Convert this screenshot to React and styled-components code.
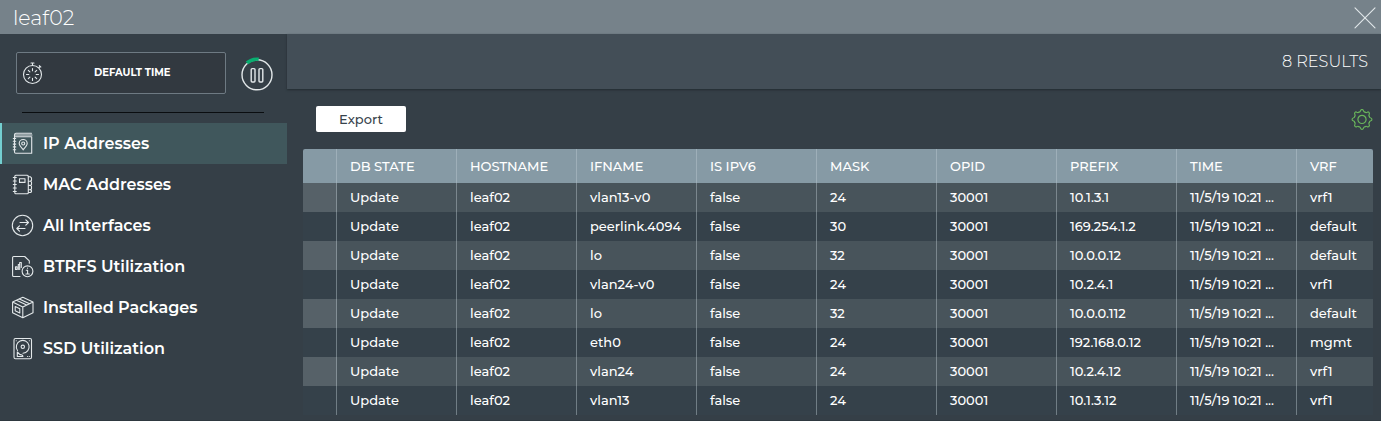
import React from "react";
import styled, { createGlobalStyle } from "styled-components";

const GlobalStyle = createGlobalStyle`
  * { box-sizing: border-box; }
  body { margin: 0; background: #353f47; font-family: Montserrat, Inter, "Liberation Sans", sans-serif; color: #fff; overflow: hidden; }
`;

const Panel = styled.div`
  height: 421px;
  display: flex;
  flex-direction: column;
  background: #353f47;
  border-bottom: 1px solid #2e383f;
`;

const TitleBar = styled.header`
  height: 34px;
  flex: none;
  display: flex;
  align-items: center;
  justify-content: space-between;
  padding: 1px 5px 0 13px;
  background: #76828a;
`;

const Title = styled.h1`
  margin: 0;
  font-size: 20.5px;
  font-weight: 300;
  line-height: 32px;
`;

const Body = styled.div`
  flex: 1;
  min-height: 0;
  display: flex;
`;

const Sidebar = styled.aside`
  width: 287px;
  flex: none;
  background: #353f47;
`;

const TimeControls = styled.div`
  display: flex;
  align-items: center;
  gap: 14px;
  padding: 18px 0 0 16px;
`;

const TimeButton = styled.button`
  width: 210px;
  height: 42px;
  display: flex;
  align-items: center;
  padding: 0 0 0 5px;
  background: #323940;
  border: 1px solid #6e7a83;
  border-radius: 2px;
  color: #fff;
  font: 700 10px/14px Montserrat, Inter, sans-serif;
`;

const TimeLabel = styled.span`
  padding-left: 50px;
  white-space: nowrap;
`;

const Divider = styled.hr`
  width: 242px;
  height: 1px;
  margin: 18px 0 10px 22px;
  border: 0;
  background: #0a0d10;
`;

const NavItem = styled.a`
  height: 41px;
  display: flex;
  align-items: center;
  gap: 9px;
  padding-left: ${(p) => (p.$active ? 9 : 11)}px;
  border-left: ${(p) => (p.$active ? "2px solid #73cfd0" : "0")};
  background: ${(p) => (p.$active ? "#40575c" : "transparent")};
`;

const NavLabel = styled.span`
  font-size: 16px;
  font-weight: 600;
  white-space: nowrap;
`;

const Main = styled.main`
  flex: 1;
  min-width: 0;
`;

const ResultsBar = styled.div`
  height: 55px;
  display: flex;
  align-items: center;
  justify-content: flex-end;
  padding: 0 13px 1px 0;
  background: #434e57;
  box-shadow: 0 1px 2px #222b31;
  font-size: 16.1px;
  font-weight: 300;
`;

const Toolbar = styled.div`
  height: 60px;
  display: flex;
  align-items: center;
  justify-content: space-between;
  padding: 0 8px 0 29px;
`;

const ExportButton = styled.button`
  width: 90px;
  height: 26px;
  padding: 0;
  border: 0;
  border-radius: 2px;
  background: #fff;
  color: #37434b;
  font: 500 13px/26px Montserrat, Inter, sans-serif;
`;

const Table = styled.div`
  margin: 0 8px 0 16px;
  border-radius: 2px 2px 0 0;
  overflow: hidden;
`;

const Row = styled.div`
  height: ${(p) => (p.$head ? 34 : 29)}px;
  display: grid;
  grid-template-columns: 34px repeat(8, 120px) 1fr;
  line-height: ${(p) => (p.$head ? 34 : 28)}px;
  background: ${(p) => (p.$head ? "#869aa5" : p.$striped ? "#48545b" : "#35414a")};
`;

const Cell = styled.div`
  padding-left: 13px;
  font-size: 13px;
  font-weight: 500;
  white-space: nowrap;
  border-right: 1px solid rgba(190, 203, 210, 0.43);
  &:last-child { border-right: 0; }
`;

const MarkerCell = styled(Cell)`
  background: ${(p) => (p.$striped ? "#566168" : "transparent")};
`;

const LineIcon = styled.svg`
  flex: none;
  fill: none;
  stroke: ${(p) => p.$color || "#e3e8ea"};
  stroke-width: ${(p) => p.$weight || 1.1};
  stroke-linejoin: round;
  stroke-linecap: round;
`;

const SettingsIcon = styled(LineIcon)`
  position: relative;
  top: 1px;
`;

const ProgressArc = styled.path`
  stroke: #08ae70;
  stroke-width: 3.4;
`;

const NavIcon = ({ children }) => (
  <LineIcon width="23" height="23" viewBox="0 0 23 23">{children}</LineIcon>
);

const IpIcon = () => (
  <NavIcon>
    <path d="M3.500 5V2.700A1.500 1.500 0 0 1 5 1.300H20.500M4 3h17M3.500 4.700h17.200v16.600H4.700a1.200 1.200 0 0 1-1.200-1.200V4.700" />
    <path d="M2.300 6.500h2.400M2.300 9.300h2.400M2.300 12.100h2.400M2.300 14.900h2.400M2.300 17.700h2.400" />
    <path d="M12.200 17.800c-2.500-2.900-4-4.500-4-6.300a4 4 0 0 1 8 0C16.200 13.300 14.700 14.900 12.200 17.800Z" />
    <circle cx="12.200" cy="11.500" r="1.500" />
  </NavIcon>
);
const MacIcon = () => (
  <NavIcon>
    <rect x="3.800" y="2.200" width="13.500" height="18.600" rx="1" />
    <path d="M2.300 4.500h3M2.300 8h3M2.300 11.500h3M2.300 15h3M2.300 18.500h3M17.300 3.700h1.900l1.300 1.200v2.500l-1 .8h-2M19.500 8.200l1 .9v2.500l-1 .8h-2M19.500 12.400l1 .9v2.600l-1 .8h-2M19.500 16.700l1 .8v1.200l-1 .8h-2" />
    <rect x="8.500" y="5.800" width="5.500" height="3.600" />
  </NavIcon>
);
const InterfacesIcon = () => (
  <NavIcon>
    <circle cx="11.500" cy="11.500" r="10.200" />
    <path d="M9 8.500h8.500M14.800 5.800l2.700 2.700-2.700 2.700M14 14.500H5.800M8.500 11.800l-2.700 2.700 2.700 2.700" />
  </NavIcon>
);
const BtrfsIcon = () => (
  <NavIcon>
    <path d="M9 21.500H2.600a1 1 0 0 1-1-1V2.500a1 1 0 0 1 1-1H13.700L18.300 5.800V8.200" />
    <path d="M4.500 14.500v-2.700h1.500v2.700ZM7.300 14.500V9.500h1.400M8.700 14.500V7.500h1.600V12.500" />
    <circle cx="16.500" cy="16.300" r="5.400" />
    <path d="M15.300 15.300h1.300V19M14.900 19h3.400M16.500 13v.2" />
  </NavIcon>
);
const PackageIcon = () => (
  <NavIcon>
    <path d="M11.800 1.300 1.600 6v10.700l10.200 5L22 16.700V6ZM11.800 11v10.700M1.600 6l10.200 5L22 6M5.500 4.200l10.200 4.900M8.400 2.900l10.200 4.900" />
    <path d="m4.200 10.600 4.600 2.100v4.200l-4.600-2.100Z" />
  </NavIcon>
);
const DiskIcon = () => (
  <NavIcon>
    <rect x="3" y="1.500" width="17.500" height="20.200" rx="1.400" />
    <path d="M6.500 13.500a6.400 6.400 0 1 1 5.500 2.700" />
    <circle cx="11.800" cy="9.800" r="1.700" />
    <path d="M6.300 15v4.500h5.600c0-1.400-1.600-2-2.900-1.800ZM5.200 3.700h.1M18.300 3.700h.1M18.300 19.500h.1M16.500 19.500h.1" />
  </NavIcon>
);

const StopwatchIcon = () => (
  <LineIcon width="22" height="24" viewBox="0 0 22 24">
    <circle cx="10.500" cy="13.500" r="9" />
    <path d="M10.500 4.500V2M9 2h3M17 6.500l1.200-1.200M17.300 4.600l1.500 1.400" />
    <path d="M10.500 7.500v2.300M10.500 17.200v2.300M4.500 13.500h2.300M14.200 13.500h2.300M6.300 9.300l1.600 1.600M13.100 16.100l1.600 1.600M14.700 9.300l-1.600 1.600M7.900 16.100l-1.600 1.600" />
  </LineIcon>
);

const PauseIcon = () => (
  <LineIcon width="34" height="36" viewBox="0 0 34 36" $weight={1.4}>
    <circle cx="17" cy="19.800" r="15" />
    <rect x="11.200" y="13.600" width="3.800" height="13.400" rx="1" />
    <rect x="19" y="13.600" width="3.800" height="13.400" rx="1" />
    <ProgressArc strokeLinecap="butt" d="M6.900 7.900A15.200 15.200 0 0 1 18.700 4.300" />
  </LineIcon>
);

const CloseIcon = () => (
  <LineIcon width="22" height="22" viewBox="0 0 22 22" $weight={1.1}>
    <path d="M1 .8 21 20.800M21 .8 1 20.800" />
  </LineIcon>
);

const toothAngles = [0, 45, 90, 135, 180, 225, 270, 315];

const GearIcon = () => (
  <SettingsIcon width="22" height="22" viewBox="-.3 .3 22.600 22.600" $color="#69b55b" $weight={1.2}>
    <circle cx="11" cy="11" r="4.200" />
    {toothAngles.map((angle) => (
      <path
        key={angle}
        transform={`rotate(${angle} 11 11)`}
        d="M7.900 3.500C9 3.500 9.300 2.900 9.600 1.900C9.900.5 12.100.5 12.400 1.900C12.700 2.900 13 3.500 14.100 3.500"
      />
    ))}
  </SettingsIcon>
);

const navItems = [
  ["IP Addresses", IpIcon],
  ["MAC Addresses", MacIcon],
  ["All Interfaces", InterfacesIcon],
  ["BTRFS Utilization", BtrfsIcon],
  ["Installed Packages", PackageIcon],
  ["SSD Utilization", DiskIcon],
];

const columns = ["DB STATE", "HOSTNAME", "IFNAME", "IS IPV6", "MASK", "OPID", "PREFIX", "TIME", "VRF"];

const entries = [
  ["vlan13-v0", "24", "10.1.3.1", "vrf1"],
  ["peerlink.4094", "30", "169.254.1.2", "default"],
  ["lo", "32", "10.0.0.12", "default"],
  ["vlan24-v0", "24", "10.2.4.1", "vrf1"],
  ["lo", "32", "10.0.0.112", "default"],
  ["eth0", "24", "192.168.0.12", "mgmt"],
  ["vlan24", "24", "10.2.4.12", "vrf1"],
  ["vlan13", "24", "10.1.3.12", "vrf1"],
];

const toCells = ([ifname, mask, prefix, vrf]) => [
  "Update", "leaf02", ifname, "false", mask, "30001", prefix, "11/5/19 10:21 ...", vrf,
];

export default function App() {
  return (
    <Panel>
      <GlobalStyle />
      <TitleBar>
        <Title>leaf02</Title>
        <CloseIcon />
      </TitleBar>
      <Body>
        <Sidebar>
          <TimeControls>
            <TimeButton>
              <StopwatchIcon />
              <TimeLabel>DEFAULT TIME</TimeLabel>
            </TimeButton>
            <PauseIcon />
          </TimeControls>
          <Divider />
          <nav>
            {navItems.map(([label, Icon], i) => (
              <NavItem key={label} $active={i === 0}>
                <Icon />
                <NavLabel>{label}</NavLabel>
              </NavItem>
            ))}
          </nav>
        </Sidebar>
        <Main>
          <ResultsBar>8 RESULTS</ResultsBar>
          <Toolbar>
            <ExportButton>Export</ExportButton>
            <GearIcon />
          </Toolbar>
          <Table>
            <Row $head>
              <MarkerCell />
              {columns.map((name) => <Cell key={name}>{name}</Cell>)}
            </Row>
            {entries.map((entry, i) => (
              <Row key={i} $striped={i % 2 === 0}>
                <MarkerCell $striped={i % 2 === 0} />
                {toCells(entry).map((value, c) => <Cell key={c}>{value}</Cell>)}
              </Row>
            ))}
          </Table>
        </Main>
      </Body>
    </Panel>
  );
}
